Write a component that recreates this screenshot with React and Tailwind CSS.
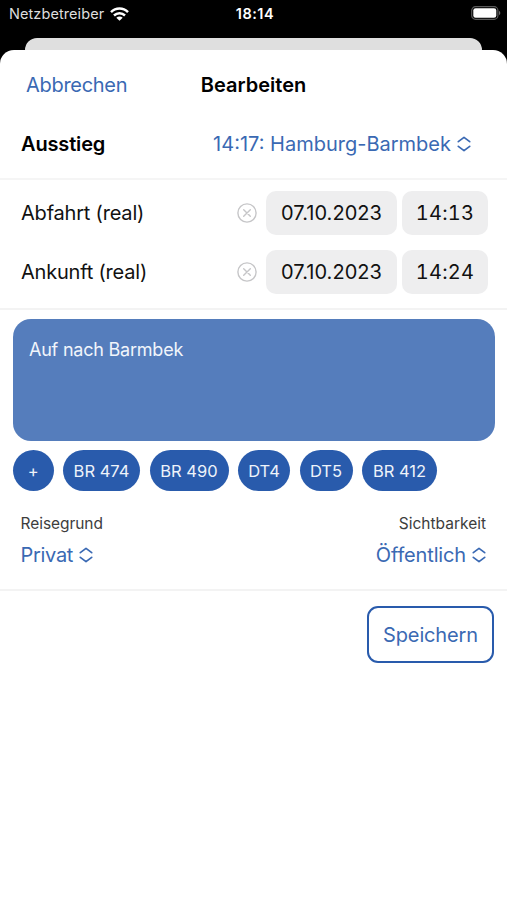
import React from "react";

function WifiIcon() {
  return (
    <svg className="h-[14px] w-[19px]" viewBox="0 0 19 14" fill="none" stroke="white" strokeWidth="2.5">
      <path d="M1 5.100C5.800.3 13.200.3 18 5.100" />
      <path d="M4 8.500c3.100-3 7.900-3 11 0" />
      <path d="M9.500 13.800L6.300 10.700c1.900-1.500 4.500-1.500 6.400 0z" fill="white" stroke="none" />
    </svg>
  );
}

function BatteryIcon() {
  return (
    <svg className="h-[14px] w-[30px]" viewBox="0 0 30 14" fill="none">
      <rect x="0.7" y="0.7" width="26.200" height="12.600" rx="3.800" stroke="#5a5a5a" strokeWidth="1.200" />
      <rect x="2.300" y="2.200" width="23" height="9.600" rx="2.300" fill="white" />
      <path d="M28 4.800c1.800.7 1.800 3.700 0 4.400z" fill="#6b6b6b" />
    </svg>
  );
}

function UpDownIcon() {
  return (
    <svg
      className="h-[16px] w-[14px] shrink-0"
      viewBox="0 0 14 16"
      fill="none"
      stroke="#3a69b3"
      strokeWidth="1.700"
      strokeLinecap="round"
      strokeLinejoin="round"
    >
      <path d="M1.300 5.700L7 1.300l5.700 4.400M1.300 10.300L7 14.700l5.700-4.400" />
    </svg>
  );
}

function ClearIcon() {
  return (
    <svg className="mr-[9px] h-[20px] w-[20px] shrink-0" viewBox="0 0 20 20" fill="none" stroke="#c6c6c8" strokeLinecap="round">
      <circle cx="10" cy="10" r="9.100" strokeWidth="1.400" />
      <path d="M6.700 6.700l6.600 6.600M13.300 6.700l-6.600 6.600" strokeWidth="1.400" />
    </svg>
  );
}

function DateRow({ label, date, time }) {
  return (
    <div className="flex h-[44px] items-center pr-[19px] pl-[21px]">
      <span className="flex-1 tracking-[-0.2px]">{label}</span>
      <ClearIcon />
      <span className="mr-[5px] flex h-[44px] w-[131px] items-center justify-center rounded-[10px] bg-[#eeeeef] tracking-[0.05px]">
        {date}
      </span>
      <span className="flex h-[44px] w-[86px] items-center justify-center rounded-[10px] bg-[#eeeeef] tracking-[0.3px] tabular-nums">
        {time}
      </span>
    </div>
  );
}

const chips = [
  { text: "+", width: "w-[40.5px]" },
  { text: "BR 474", width: "w-[77px]" },
  { text: "BR 490", width: "w-[79px]" },
  { text: "DT4", width: "w-[52px]" },
  { text: "DT5", width: "w-[53px]" },
  { text: "BR 412", width: "w-[75px]" },
];

export default function App() {
  return (
    <div className="flex h-[900px] w-[507px] flex-col overflow-hidden bg-black font-['Inter','Liberation_Sans',sans-serif] text-[20px] leading-none whitespace-nowrap text-[#111]">
      <div className="grid h-[38px] shrink-0 grid-cols-3 items-start pt-[6px] pr-[6px] pl-[9px] text-[14.5px] text-[#dedede]">
        <div className="flex items-center gap-[6px]">
          <span className="leading-[16px] tracking-[0.08px]">Netzbetreiber</span>
          <WifiIcon />
        </div>
        <span className="text-center leading-[16px] font-semibold tracking-[0.5px] text-white">18:14</span>
        <div className="flex justify-end">
          <BatteryIcon />
        </div>
      </div>
      <div className="mx-[25px] h-[12px] shrink-0 rounded-t-[12px] bg-[#dfdfdf]" />
      <div className="flex-1 rounded-t-[14px] bg-white">
        <div className="grid h-[69px] grid-cols-[1fr_auto_1fr] items-center px-[26px]">
          <span className="tracking-[-0.3px] text-[#3a69b3]">Abbrechen</span>
          <span className="font-semibold text-black">Bearbeiten</span>
          <span />
        </div>
        <div className="flex h-[61px] items-start justify-between border-b-2 border-[#f5f5f5] pt-[15px] pr-[36px] pl-[21px]">
          <span className="font-semibold tracking-[-0.15px] text-black">Ausstieg</span>
          <span className="flex items-center gap-[6px] text-[#3a69b3]">
            14:17: Hamburg-Barmbek
            <UpDownIcon />
          </span>
        </div>
        <div className="flex h-[130px] flex-col gap-[15px] border-b-2 border-[#f3f3f3] pt-[11px]">
          <DateRow label="Abfahrt (real)" date="07.10.2023" time="14:13" />
          <DateRow label="Ankunft (real)" date="07.10.2023" time="14:24" />
        </div>
        <div className="mx-[13px] mt-[9px] h-[121.5px] w-[482px] rounded-[18px] bg-[#557dbc] px-[16px] pt-[22px] text-[18px] tracking-[-0.22px] text-[#f1f5fb]">
          Auf nach Barmbek
        </div>
        <div className="mt-[9.5px] ml-[13px] flex gap-[9.5px] text-[16.5px] text-[#eef3fa]">
          {chips.map((chip) => (
            <span
              key={chip.text}
              className={`flex h-[41px] items-center justify-center rounded-full bg-[#295bac] pt-px ${chip.width}`}
            >
              {chip.text}
            </span>
          ))}
        </div>
        <div className="flex h-[100px] justify-between border-b-2 border-[#f3f3f3] pt-[25px] pr-[21px] pl-[20.5px]">
          <div className="flex flex-col gap-[13px]">
            <span className="text-[15.500px] tracking-[-0.05px] text-[#3d3d3d]">Reisegrund</span>
            <span className="flex items-center gap-[6px] tracking-[-0.3px] text-[#3a69b3]">
              Privat
              <UpDownIcon />
            </span>
          </div>
          <div className="flex flex-col items-end gap-[13px]">
            <span className="text-[15.500px] text-[#3d3d3d]">Sichtbarkeit</span>
            <span className="flex items-center gap-[6px] tracking-[-0.15px] text-[#3a69b3]">
              Öffentlich
              <UpDownIcon />
            </span>
          </div>
        </div>
        <div className="mt-[15px] mr-[13px] ml-auto flex h-[57px] w-[127px] items-center justify-center rounded-[11px] border-[2.5px] border-[#295bac] tracking-[-0.15px] text-[#3a69b3]">
          Speichern
        </div>
      </div>
    </div>
  );
}
